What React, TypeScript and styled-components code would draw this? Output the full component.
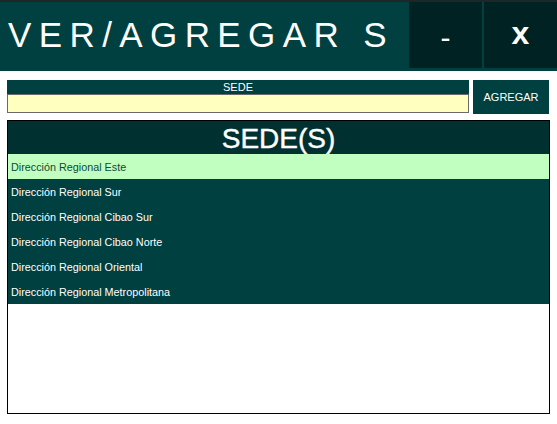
import React from "react";
import styled, { createGlobalStyle } from "styled-components";

const Global = createGlobalStyle`
  html, body { margin: 0; padding: 0; background: #ffffff; }
  body { font-family: "Liberation Sans", Arial, sans-serif; }
  * { box-sizing: border-box; }
`;

const Window = styled.div`
  width: 557px;
  height: 424px;
  display: flex;
  flex-direction: column;
  background: #ffffff;
  overflow: hidden;
`;

const TitleBar = styled.div`
  height: 71px;
  border-top: 2px solid #1e2626;
  background: #004040;
  display: flex;
  align-items: flex-start;
`;

const Title = styled.div`
  flex: 1;
  height: 66px;
  display: flex;
  align-items: center;
  padding-left: 8px;
  color: #ffffff;
  font-size: 35px;
  letter-spacing: 7.4px;
  white-space: nowrap;
  overflow: hidden;
`;

const WinButton = styled.div<{ $bold?: boolean }>`
  width: 73px;
  height: 66px;
  margin-left: 2px;
  background: #002222;
  color: #ffffff;
  display: flex;
  align-items: center;
  justify-content: center;
  font-size: ${(p) => (p.$bold ? "32px" : "30px")};
  font-weight: ${(p) => (p.$bold ? 700 : 400)};
  padding-bottom: ${(p) => (p.$bold ? "4px" : "0px")};
  padding-top: ${(p) => (p.$bold ? "0px" : "5px")};
`;

const Content = styled.div`
  flex: 1;
  display: flex;
  flex-direction: column;
  padding: 9px 7px 10px 7px;
  gap: 6px;
`;

const FormRow = styled.div`
  display: flex;
  gap: 4px;
  height: 34px;
`;

const Field = styled.div`
  width: 462px;
  display: flex;
  flex-direction: column;
`;

const FieldLabel = styled.div`
  height: 14px;
  background: #004040;
  color: #ffffff;
  font-size: 11px;
  line-height: 14px;
  text-align: center;
`;

const FieldInput = styled.div`
  height: 19px;
  background: #ffffc0;
  border: 1px solid #6a6a6a;
`;

const AddButton = styled.div`
  width: 76px;
  background: #004040;
  color: #ffffff;
  font-size: 11px;
  display: flex;
  align-items: center;
  justify-content: center;
`;

const ListBox = styled.div`
  width: 543px;
  height: 294px;
  border: 1px solid #000000;
  display: flex;
  flex-direction: column;
  background: #ffffff;
`;

const ListHeader = styled.div`
  height: 33px;
  background: #003030;
  color: #ffffff;
  font-size: 28px;
  display: flex;
  align-items: center;
  justify-content: center;
  padding-top: 2px;
  -webkit-text-stroke: 0.4px #ffffff;
`;

const Row = styled.div<{ $selected?: boolean }>`
  height: 25px;
  display: flex;
  align-items: center;
  padding-left: 3px;
  font-size: 10.8px;
  background: ${(p) => (p.$selected ? "#c0ffc0" : "#004040")};
  color: ${(p) => (p.$selected ? "#0d4a3a" : "#ffffff")};
`;

const sedes = [
  "Dirección Regional Este",
  "Dirección Regional Sur",
  "Dirección Regional Cibao Sur",
  "Dirección Regional Cibao Norte",
  "Dirección Regional Oriental",
  "Dirección Regional Metropolitana",
];

export default function App() {
  return (
    <>
      <Global />
      <Window>
        <TitleBar>
          <Title>VER/AGREGAR S</Title>
          <WinButton>-</WinButton>
          <WinButton $bold>x</WinButton>
        </TitleBar>
        <Content>
          <FormRow>
            <Field>
              <FieldLabel>SEDE</FieldLabel>
              <FieldInput />
            </Field>
            <AddButton>AGREGAR</AddButton>
          </FormRow>
          <ListBox>
            <ListHeader>SEDE(S)</ListHeader>
            {sedes.map((s, i) => (
              <Row key={s} $selected={i === 0}>
                {s}
              </Row>
            ))}
          </ListBox>
        </Content>
      </Window>
    </>
  );
}
